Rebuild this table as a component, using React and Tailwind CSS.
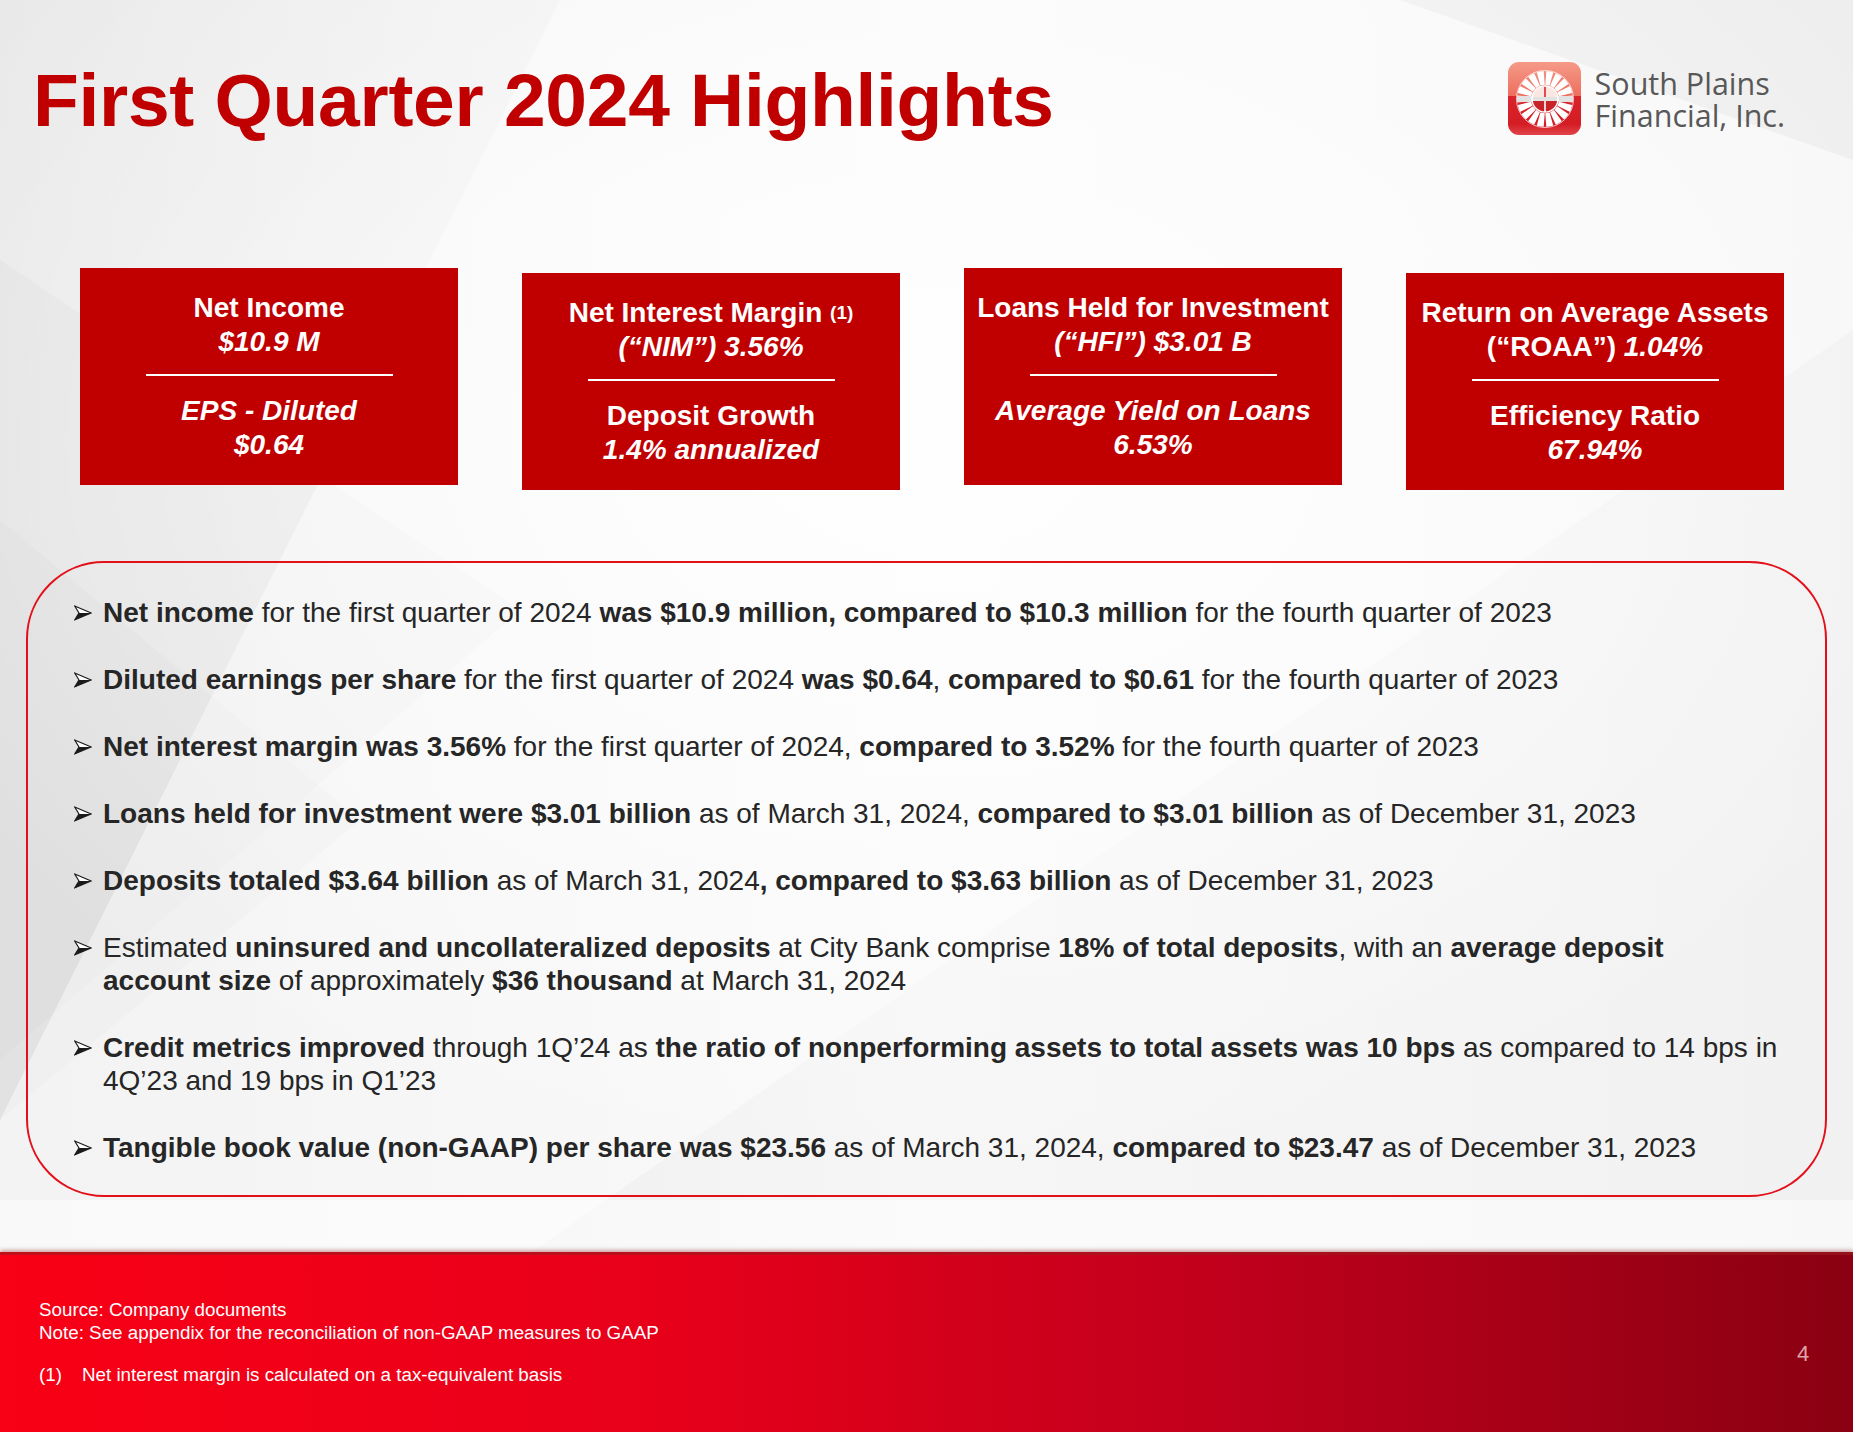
import React from "react";

const Logo = () => {
  const blades = Array.from({ length: 18 }, (_, i) => i * 20 + 10);
  return (
    <svg width="75" height="75" viewBox="0 0 75 75">
      <defs>
        <linearGradient id="lg" x1="0" y1="0" x2="0" y2="1">
          <stop offset="0" stopColor="#f59a88" />
          <stop offset="0.46" stopColor="#ee6f5f" />
          <stop offset="0.47" stopColor="#d9242b" />
          <stop offset="0.85" stopColor="#d41c24" />
          <stop offset="1" stopColor="#e0454a" />
        </linearGradient>
        <clipPath id="wc">
          <circle cx="38" cy="38" r="28" />
        </clipPath>
      </defs>
      <rect x="1" y="1" width="73" height="73" rx="11" fill="url(#lg)" />
      <circle cx="38" cy="38" r="28.5" fill="none" stroke="#ffffff" strokeWidth="1" opacity="0.7" />
      <g clipPath="url(#wc)">
        {blades.map((a) => (
          <g key={a} transform={`rotate(${a} 38 38)`}>
            <polygon points="35.8,24 40.2,24 41.6,9.5 34.4,9.5" fill="#ffffff" />
          </g>
        ))}
        <rect x="9" y="35" width="58" height="6" fill="#e2e2e2" />
      </g>
      <path d="M25 38 A13 13 0 0 1 51 38 Z" fill="#fbe6e1" />
      <path d="M25 38 A13 13 0 0 0 51 38 Z" fill="#c9232a" />
      <rect x="25" y="36" width="26" height="4" fill="#e2e2e2" />
      <line x1="38" y1="25" x2="38" y2="36" stroke="#d9242b" strokeWidth="1.6" />
      <line x1="38" y1="40" x2="38" y2="51" stroke="#ffffff" strokeWidth="1.6" />
      <circle cx="38" cy="38" r="13" fill="none" stroke="#ffffff" strokeWidth="1.4" />
    </svg>
  );
};

const Arrow = () => (
  <svg width="18" height="16" viewBox="0 0 20 17" className="mt-[9px]">
    <polygon points="0.8,0.8 19,8.5 0.8,16.2 5.5,8.5" fill="#ffffff" stroke="#1a1a1a" strokeWidth="1.3" strokeLinejoin="miter" />
    <polygon points="5.5,8.5 19,8.5 0.8,16.2" fill="#1a1a1a" />
  </svg>
);

const Box = ({ top, bottom, offset }) => (
  <div
    className={`flex h-[217px] w-[378px] flex-col items-center justify-center bg-[#c00000] text-center text-[28px] font-bold leading-[34px] text-white ${
      offset ? "mt-[5px]" : ""
    }`}
  >
    <div>{top}</div>
    <div className="mb-[18px] mt-[15px] h-[2px] w-[247px] bg-white" />
    <div>{bottom}</div>
  </div>
);

const B = ({ children }) => <span className="font-bold">{children}</span>;

const Bullet = ({ children }) => (
  <div className="flex">
    <div className="h-[33px] w-[30px] shrink-0 pl-[1px]">
      <Arrow />
    </div>
    <div className="whitespace-nowrap">{children}</div>
  </div>
);

export default function App() {
  return (
    <div className="relative flex h-[1432px] w-[1853px] flex-col overflow-hidden bg-[#efefef] font-['Liberation_Sans',Arial,sans-serif]">
      <svg
        className="absolute left-0 top-0"
        width="1853"
        height="1260"
        viewBox="0 0 1853 1260"
      >
        <defs>
          <linearGradient id="bg1" x1="0" y1="0" x2="1" y2="0">
            <stop offset="0" stopColor="#e9e9e9" />
            <stop offset="0.5" stopColor="#f6f6f6" />
            <stop offset="1" stopColor="#f1f1f1" />
          </linearGradient>
          <radialGradient id="glow" cx="0.5" cy="0.35" r="0.6">
            <stop offset="0" stopColor="#ffffff" stopOpacity="0.9" />
            <stop offset="1" stopColor="#ffffff" stopOpacity="0" />
          </radialGradient>
        </defs>
        <rect width="1853" height="1260" fill="url(#bg1)" />
        <polygon points="0,260 520,610 0,1060" fill="#dedede" opacity="0.55" />
        <polygon points="0,520 360,820 0,1120" fill="#d8d8d8" opacity="0.35" />
        <polygon points="560,0 1853,0 1853,330 520,1260 0,1260 0,1120" fill="#ffffff" opacity="0.45" />
        <polygon points="1400,0 1853,0 1853,160" fill="#e8e8e8" opacity="0.6" />
        <rect width="1853" height="1260" fill="url(#glow)" />
        <rect y="1200" width="1853" height="60" fill="#ffffff" opacity="0.5" />
      </svg>

      <div className="relative flex items-start justify-between pl-[33px] pr-[68px] pt-[62px]">
        <h1 className="text-[75px] font-bold leading-[76px] tracking-[-0.3px] text-[#c00000]">
          First Quarter 2024 Highlights
        </h1>
        <div className="mt-[-1px] flex items-center gap-[13px]">
          <Logo />
          <div className="font-['Open_Sans',sans-serif] text-[30.5px] leading-[32px] text-[#585858]">
            <div>South Plains</div>
            <div>Financial, Inc.</div>
          </div>
        </div>
      </div>

      <div className="relative mt-[130px] flex items-start gap-[64px] pl-[80px]">
        <Box
          top={
            <>
              <div>Net Income</div>
              <div className="italic">$10.9 M</div>
            </>
          }
          bottom={
            <>
              <div className="italic">EPS - Diluted</div>
              <div className="italic">$0.64</div>
            </>
          }
        />
        <Box
          offset
          top={
            <>
              <div>
                Net Interest Margin{" "}
                <sup className="relative top-[-3px] text-[19px]">(1)</sup>
              </div>
              <div className="italic">(“NIM”) 3.56%</div>
            </>
          }
          bottom={
            <>
              <div>Deposit Growth</div>
              <div className="italic">1.4% annualized</div>
            </>
          }
        />
        <Box
          top={
            <>
              <div>Loans Held for Investment</div>
              <div className="italic">(“HFI”) $3.01 B</div>
            </>
          }
          bottom={
            <>
              <div className="italic">Average Yield on Loans</div>
              <div className="italic">6.53%</div>
            </>
          }
        />
        <Box
          offset
          top={
            <>
              <div>Return on Average Assets</div>
              <div>
                (“ROAA”) <span className="italic">1.04%</span>
              </div>
            </>
          }
          bottom={
            <>
              <div>Efficiency Ratio</div>
              <div className="italic">67.94%</div>
            </>
          }
        />
      </div>

      <div className="relative ml-[26px] mt-[71px] flex h-[636px] w-[1801px] flex-col gap-[34px] rounded-[78px] border-2 border-[#e3101a] pl-[45px] pt-[33px] text-[28px] leading-[33px] text-[#262626]">
        <Bullet>
          <B>Net income</B> for the first quarter of 2024{" "}
          <B>was $10.9 million, compared to $10.3 million</B> for the fourth
          quarter of 2023
        </Bullet>
        <Bullet>
          <B>Diluted earnings per share</B> for the first quarter of 2024{" "}
          <B>was $0.64</B>, <B>compared to $0.61</B> for the fourth quarter of
          2023
        </Bullet>
        <Bullet>
          <B>Net interest margin was 3.56%</B> for the first quarter of 2024,{" "}
          <B>compared to 3.52%</B> for the fourth quarter of 2023
        </Bullet>
        <Bullet>
          <B>Loans held for investment were $3.01 billion</B> as of March 31,
          2024, <B>compared to $3.01 billion</B> as of December 31, 2023
        </Bullet>
        <Bullet>
          <B>Deposits totaled $3.64 billion</B> as of March 31, 2024
          <B>, compared to $3.63 billion</B> as of December 31, 2023
        </Bullet>
        <Bullet>
          Estimated <B>uninsured and uncollateralized deposits</B> at City Bank
          comprise <B>18% of total deposits</B>, with an{" "}
          <B>average deposit</B>
          <br />
          <B>account size</B> of approximately <B>$36 thousand</B> at March 31,
          2024
        </Bullet>
        <Bullet>
          <B>Credit metrics improved</B> through 1Q’24 as{" "}
          <B>
            the ratio of nonperforming assets to total assets was 10 bps
          </B>{" "}
          as compared to 14 bps in
          <br />
          4Q’23 and 19 bps in Q1’23
        </Bullet>
        <Bullet>
          <B>Tangible book value (non-GAAP) per share was $23.56</B> as of
          March 31, 2024, <B>compared to $23.47</B> as of December 31, 2023
        </Bullet>
      </div>

      <div className="absolute bottom-0 left-0 h-[180px] w-[1853px] bg-[linear-gradient(90deg,#f80016_0%,#e8001a_35%,#c2001c_65%,#8a0012_100%)] shadow-[0_-2px_4px_rgba(120,0,0,0.35)]">
        <div className="absolute left-0 top-0 h-[3px] w-full bg-[#9b1a1f] opacity-60" />
        <div className="pl-[39px] pt-[46px] text-[18.8px] leading-[23px] text-white">
          <div>Source: Company documents</div>
          <div>Note: See appendix for the reconciliation of non-GAAP measures to GAAP</div>
          <div className="mt-[19px] flex">
            <span className="w-[43px]">(1)</span>
            <span>Net interest margin is calculated on a tax-equivalent basis</span>
          </div>
        </div>
        <div className="absolute left-[1797px] top-[88px] text-[22px] leading-[28px] text-[#e0a3aa]">
          4
        </div>
      </div>
    </div>
  );
}
